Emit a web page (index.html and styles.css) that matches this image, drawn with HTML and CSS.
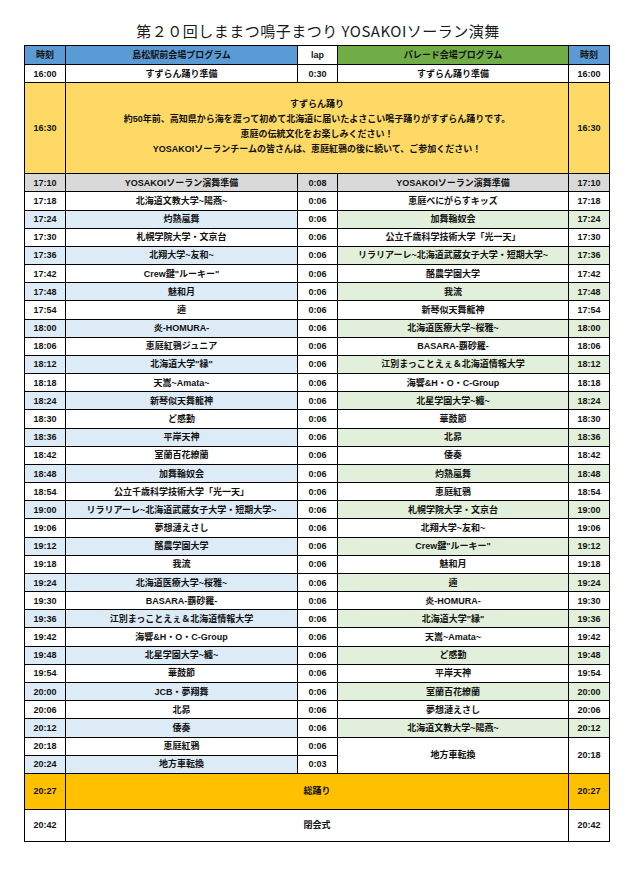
FILE: index.html
```html
<!DOCTYPE html>
<html lang="ja">
<head>
<meta charset="utf-8">
<title>第２０回しままつ鳴子まつり YOSAKOIソーラン演舞</title>
<link rel="stylesheet" href="styles.css">
</head>
<body>
<h1 class="title">第２０回しままつ鳴子まつり YOSAKOIソーラン演舞</h1>
<table class="sched">
<colgroup>
<col class="c-time"><col class="c-prog"><col class="c-lap"><col class="c-prog2"><col class="c-time2">
</colgroup>
<tbody>
<tr class="head">
<td class="h-blue">時刻</td><td class="h-blue">島松駅前会場プログラム</td><td class="h-lap">lap</td><td class="h-green">パレード会場プログラム</td><td class="h-blue">時刻</td>
</tr>
<tr class="r"><td>16:00</td><td>すずらん踊り準備</td><td>0:30</td><td>すずらん踊り準備</td><td>16:00</td></tr>
<tr class="big">
<td>16:30</td>
<td colspan="3" class="intro">すずらん踊り<br>約50年前、高知県から海を渡って初めて北海道に届いたよさこい鳴子踊りがすずらん踊りです。<br>恵庭の伝統文化をお楽しみください！<br>YOSAKOIソーランチームの皆さんは、恵庭紅鴉の後に続いて、ご参加ください！</td>
<td>16:30</td>
</tr>
<tr class="r prep"><td>17:10</td><td>YOSAKOIソーラン演舞準備</td><td>0:08</td><td>YOSAKOIソーラン演舞準備</td><td>17:10</td></tr>
<tr class="r"><td>17:18</td><td>北海道文教大学~陽燕~</td><td>0:06</td><td>恵庭べにがらすキッズ</td><td>17:18</td></tr>
<tr class="r s"><td>17:24</td><td>灼熱嵐舞</td><td>0:06</td><td>加舞輪奴会</td><td>17:24</td></tr>
<tr class="r"><td>17:30</td><td>札幌学院大学・文京台</td><td>0:06</td><td>公立千歳科学技術大学「光一天」</td><td>17:30</td></tr>
<tr class="r s"><td>17:36</td><td>北翔大学~友和~</td><td>0:06</td><td>リラリアーレ~北海道武蔵女子大学・短期大学~</td><td>17:36</td></tr>
<tr class="r"><td>17:42</td><td>Crew鍵"ルーキー"</td><td>0:06</td><td>酪農学園大学</td><td>17:42</td></tr>
<tr class="r s"><td>17:48</td><td>魅和月</td><td>0:06</td><td>我流</td><td>17:48</td></tr>
<tr class="r"><td>17:54</td><td>遖</td><td>0:06</td><td>新琴似天舞龍神</td><td>17:54</td></tr>
<tr class="r s"><td>18:00</td><td>炎-HOMURA-</td><td>0:06</td><td>北海道医療大学~桜雅~</td><td>18:00</td></tr>
<tr class="r"><td>18:06</td><td>恵庭紅鴉ジュニア</td><td>0:06</td><td>BASARA-覇砂羅-</td><td>18:06</td></tr>
<tr class="r s"><td>18:12</td><td>北海道大学"縁"</td><td>0:06</td><td>江別まっことえぇ＆北海道情報大学</td><td>18:12</td></tr>
<tr class="r"><td>18:18</td><td>天嵩~Amata~</td><td>0:06</td><td>海響&amp;H・O・C-Group</td><td>18:18</td></tr>
<tr class="r s"><td>18:24</td><td>新琴似天舞龍神</td><td>0:06</td><td>北星学園大学~纏~</td><td>18:24</td></tr>
<tr class="r"><td>18:30</td><td>ど感動</td><td>0:06</td><td>華鼓節</td><td>18:30</td></tr>
<tr class="r s"><td>18:36</td><td>平岸天神</td><td>0:06</td><td>北昴</td><td>18:36</td></tr>
<tr class="r"><td>18:42</td><td>室蘭百花繚蘭</td><td>0:06</td><td>倭奏</td><td>18:42</td></tr>
<tr class="r s"><td>18:48</td><td>加舞輪奴会</td><td>0:06</td><td>灼熱嵐舞</td><td>18:48</td></tr>
<tr class="r"><td>18:54</td><td>公立千歳科学技術大学「光一天」</td><td>0:06</td><td>恵庭紅鴉</td><td>18:54</td></tr>
<tr class="r s"><td>19:00</td><td>リラリアーレ~北海道武蔵女子大学・短期大学~</td><td>0:06</td><td>札幌学院大学・文京台</td><td>19:00</td></tr>
<tr class="r"><td>19:06</td><td>夢想漣えさし</td><td>0:06</td><td>北翔大学~友和~</td><td>19:06</td></tr>
<tr class="r s"><td>19:12</td><td>酪農学園大学</td><td>0:06</td><td>Crew鍵"ルーキー"</td><td>19:12</td></tr>
<tr class="r"><td>19:18</td><td>我流</td><td>0:06</td><td>魅和月</td><td>19:18</td></tr>
<tr class="r s"><td>19:24</td><td>北海道医療大学~桜雅~</td><td>0:06</td><td>遖</td><td>19:24</td></tr>
<tr class="r"><td>19:30</td><td>BASARA-覇砂羅-</td><td>0:06</td><td>炎-HOMURA-</td><td>19:30</td></tr>
<tr class="r s"><td>19:36</td><td>江別まっことえぇ＆北海道情報大学</td><td>0:06</td><td>北海道大学"縁"</td><td>19:36</td></tr>
<tr class="r"><td>19:42</td><td>海響&amp;H・O・C-Group</td><td>0:06</td><td>天嵩~Amata~</td><td>19:42</td></tr>
<tr class="r s"><td>19:48</td><td>北星学園大学~纏~</td><td>0:06</td><td>ど感動</td><td>19:48</td></tr>
<tr class="r"><td>19:54</td><td>華鼓節</td><td>0:06</td><td>平岸天神</td><td>19:54</td></tr>
<tr class="r s"><td>20:00</td><td>JCB・夢翔舞</td><td>0:06</td><td>室蘭百花繚蘭</td><td>20:00</td></tr>
<tr class="r"><td>20:06</td><td>北昴</td><td>0:06</td><td>夢想漣えさし</td><td>20:06</td></tr>
<tr class="r s"><td>20:12</td><td>倭奏</td><td>0:06</td><td>北海道文教大学~陽燕~</td><td>20:12</td></tr>
<tr class="r"><td>20:18</td><td>恵庭紅鴉</td><td>0:06</td><td rowspan="2">地方車転換</td><td rowspan="2">20:18</td></tr>
<tr class="r sl"><td>20:24</td><td>地方車転換</td><td>0:03</td></tr>
<tr class="all"><td>20:27</td><td colspan="3">総踊り</td><td>20:27</td></tr>
<tr class="close"><td>20:42</td><td colspan="3">閉会式</td><td>20:42</td></tr>
</tbody>
</table>
</body>
</html>
```

FILE: styles.css
```css
html, body {
  margin: 0;
  padding: 0;
  background: #ffffff;
}

body {
  width: 636px;
  font-family: "Liberation Sans", "Noto Sans CJK JP", sans-serif;
  color: #000;
}

.title {
  margin: 0;
  padding-top: 22px;
  height: 23px;
  box-sizing: content-box;
  font-family: "Noto Sans CJK JP", sans-serif;
  font-size: 15px;
  line-height: 18px;
  font-weight: normal;
  text-align: center;
  color: #1a1a1a;
  letter-spacing: 0.5px;
}

.sched {
  margin-left: 24px;
  width: 585px;
  border-collapse: collapse;
  table-layout: fixed;
  font-family: "Liberation Sans", "Noto Sans CJK JP", sans-serif;
  font-size: 9px;
  font-weight: bold;
}

.c-time { width: 41px; }
.c-prog { width: 232px; }
.c-lap { width: 40px; }
.c-prog2 { width: 231px; }
.c-time2 { width: 41px; }

.sched td {
  border: 1px solid #000;
  padding: 0;
  text-align: center;
  vertical-align: middle;
  line-height: 12px;
  white-space: nowrap;
  overflow: hidden;
  color: #111;
}

.head { height: 19px; }
.h-blue { background: #5b9bd5; }
.h-green { background: #70ad47; }
.h-lap { background: #ffffff; }

.r { height: 18.18px; }

.big { height: 91px; }
.big td { background: #ffd966; }
.sched .intro { line-height: 15px; padding-bottom: 2px; }

.prep td { background: #d9d9d9; }

.s td:nth-child(1),
.s td:nth-child(2),
.sl td:nth-child(1),
.sl td:nth-child(2) { background: #ddebf7; }

.s td:nth-child(4),
.s td:nth-child(5) { background: #e2efda; }

.all { height: 36px; }
.all td { background: #ffc000; }

.close { height: 32px; }
```
